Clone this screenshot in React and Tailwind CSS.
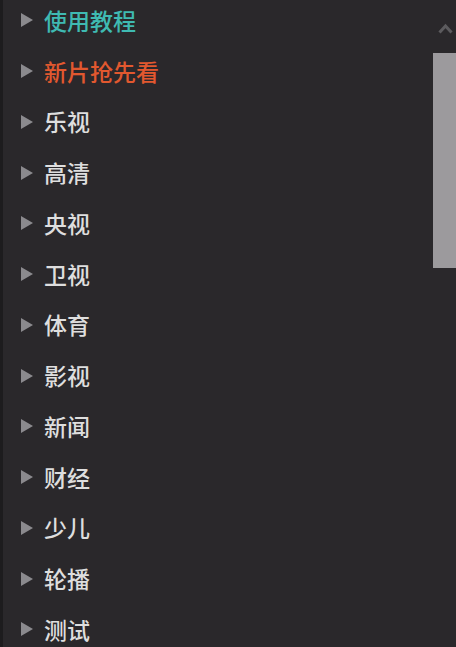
import React from 'react';

const items = [
  { label: '使用教程', color: 'text-[#3fbab2]' },
  { label: '新片抢先看', color: 'text-[#e2582f]' },
  { label: '乐视' },
  { label: '高清' },
  { label: '央视' },
  { label: '卫视' },
  { label: '体育' },
  { label: '影视' },
  { label: '新闻' },
  { label: '财经' },
  { label: '少儿' },
  { label: '轮播' },
  { label: '测试' },
];

const Arrow = () => (
  <svg width="12" height="14" viewBox="0 0 12 14" className="shrink-0">
    <path d="M0 0 L12 7 L0 14 Z" fill="#8b8a8e" />
  </svg>
);

export default function App() {
  return (
    <div
      className="w-[456px] h-[647px] overflow-hidden flex bg-[#2a282b]"
      style={{ fontFamily: '"Microsoft YaHei", "Noto Sans CJK SC", sans-serif' }}
    >
      <div className="w-[3px] bg-[#1d1c1e] shrink-0" />

      <ul className="flex-1 -mt-[5px]">
        {items.map((it) => (
          <li key={it.label} className="h-[50.75px] flex items-center pl-[18px] gap-[11px]">
            <Arrow />
            <span className={`text-[23px] leading-none font-medium ${it.color || 'text-[#dedede]'}`}>
              {it.label}
            </span>
          </li>
        ))}
      </ul>

      {/* scrollbar */}
      <div className="w-[23px] shrink-0 flex flex-col items-start">
        <div className="h-[53px] flex items-start pt-[23px] pl-[5px]">
          <svg width="15" height="11" viewBox="0 0 15 11">
            <path d="M1.5 9.5 L7.5 3 L13.5 9.5" stroke="#5c5b5e" strokeWidth="3" fill="none" />
          </svg>
        </div>
        <div className="w-full h-[215px] bg-[#9c9a9d]" />
      </div>
    </div>
  );
}
